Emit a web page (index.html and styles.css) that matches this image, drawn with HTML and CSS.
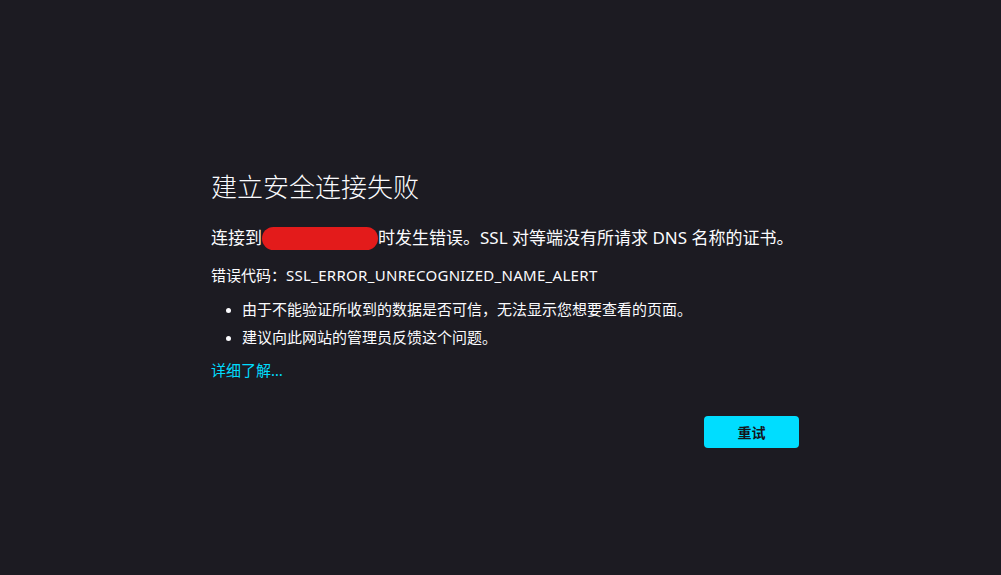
FILE: index.html
```html
<!DOCTYPE html>
<html lang="zh-CN">
<head>
<meta charset="utf-8">
<title>建立安全连接失败</title>
<link rel="stylesheet" href="styles.css">
</head>
<body>
<main class="container">
  <h1 class="title">建立安全连接失败</h1>
  <p class="desc">连接到<span class="redact"></span>时发生错误。SSL 对等端没有所请求 DNS 名称的证书。</p>
  <p class="code">错误代码：<span class="code-id">SSL_ERROR_UNRECOGNIZED_NAME_ALERT</span></p>
  <ul class="list">
    <li>由于不能验证所收到的数据是否可信，无法显示您想要查看的页面。</li>
    <li>建议向此网站的管理员反馈这个问题。</li>
  </ul>
  <a class="more" href="#">详细了解…</a>
  <div class="actions">
    <button class="retry">重试</button>
  </div>
</main>
</body>
</html>
```

FILE: styles.css
```css
html, body {
  margin: 0;
  padding: 0;
  background: #1c1b22;
  color: #fbfbfe;
  font-family: "Noto Sans", "Noto Sans CJK SC", sans-serif;
}
body {
  min-height: 575px;
}
.container {
  width: 588px;
  margin-left: 211px;
  padding-top: 168px;
}
.title {
  margin: 0;
  font-size: 26px;
  font-weight: 300;
  line-height: 38px;
}
.desc {
  margin: 20px 0 0;
  font-size: 17px;
  line-height: 24px;
}
.redact {
  display: inline-block;
  width: 116px;
  height: 23px;
  background: #e31b1b;
  border-radius: 12px;
  vertical-align: -6px;
}
.code {
  margin: 13px 0 0;
  font-size: 15px;
  line-height: 24px;
}
.code-id {
  letter-spacing: 0.3px;
}
.list {
  margin: 8px 0 0;
  padding-left: 31px;
  font-size: 15px;
  line-height: 28px;
}
.list li::marker {
  font-size: 13px;
}
.more {
  display: block;
  margin-top: 6px;
  color: #00ddff;
  text-decoration: none;
  font-size: 15px;
  line-height: 26px;
}
.actions {
  display: flex;
  justify-content: flex-end;
  margin-top: 33px;
}
.retry {
  width: 95px;
  height: 32px;
  border: none;
  border-radius: 4px;
  background: #00ddff;
  color: #15141a;
  font-family: "Noto Sans CJK SC", sans-serif;
  font-weight: 700;
  font-size: 14px;
}
```
